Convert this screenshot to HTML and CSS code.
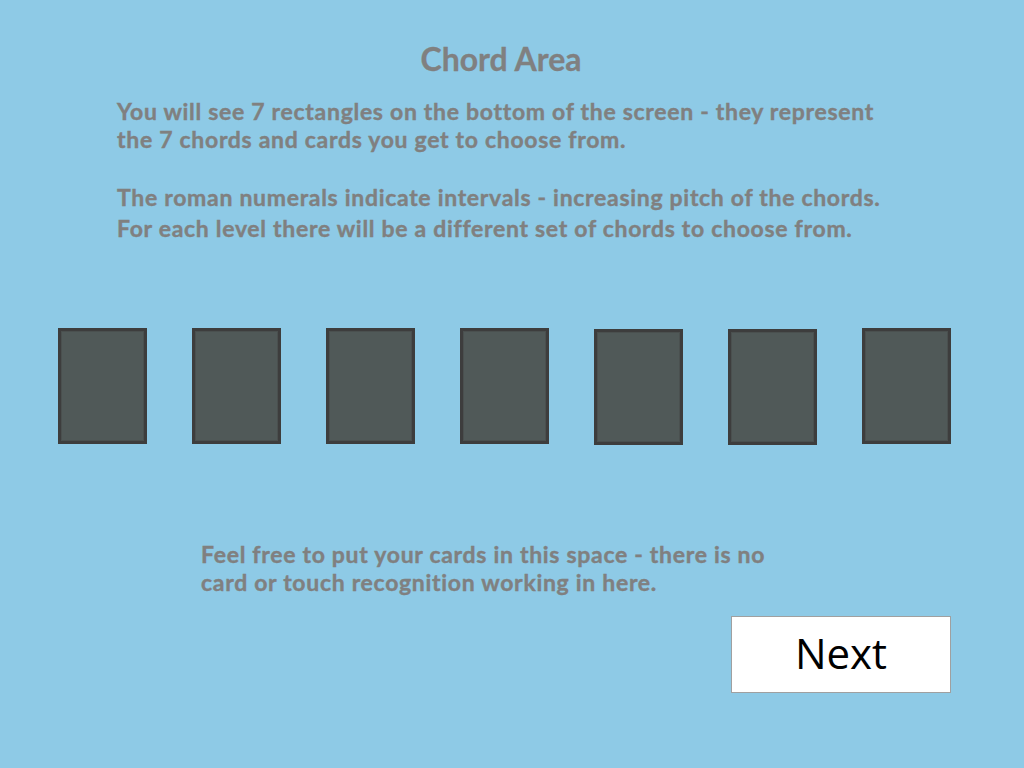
FILE: index.html
```html
<!DOCTYPE html>
<html lang="en">
<head>
<meta charset="utf-8">
<title>Chord Area</title>
<link rel="stylesheet" href="styles.css">
</head>
<body>
<main class="page">
  <section class="intro">
    <h1 class="title">Chord Area</h1>
    <p class="text text-first">You will see 7 rectangles on the bottom of the screen - they represent<br>the 7 chords and cards you get to choose from.</p>
    <p class="text text-second">The roman numerals indicate intervals - increasing pitch of the chords.<br>For each level there will be a different set of chords to choose from.</p>
  </section>
  <div class="cards">
    <div class="card"></div>
    <div class="card"></div>
    <div class="card"></div>
    <div class="card"></div>
    <div class="card card-low"></div>
    <div class="card card-low"></div>
    <div class="card"></div>
  </div>
  <p class="text note">Feel free to put your cards in this space - there is no<br>card or touch recognition working in here.</p>
  <div class="actions">
    <button class="next" type="button">Next</button>
  </div>
</main>
</body>
</html>
```
FILE: styles.css
```css
html, body {
  margin: 0;
  padding: 0;
  background: #8ecae6;
}

body {
  width: 1024px;
  height: 768px;
  overflow: hidden;
  font-family: Lato, "Liberation Sans", sans-serif;
}

.page {
  width: 893px;
  margin-left: 58px;
  padding-top: 40px;
  display: flex;
  flex-direction: column;
}

.intro {
  width: 768px;
  margin-left: 59px;
}

.title {
  margin: 0;
  font-size: 32px;
  line-height: 38px;
  font-weight: 700;
  color: #808080;
  text-align: center;
  -webkit-text-stroke: 0.3px #808080;
}

.text {
  margin: 0;
  font-size: 23px;
  line-height: 28px;
  font-weight: 700;
  letter-spacing: 0.7px;
  color: #808080;
  white-space: nowrap;
  -webkit-text-stroke: 0.4px #808080;
}

.text-first {
  margin-top: 19px;
}

.text-second {
  margin-top: 29px;
  line-height: 31px;
}

.cards {
  display: flex;
  gap: 45px;
  align-items: flex-start;
  margin-top: 84px;
}

.card {
  box-sizing: border-box;
  width: 89px;
  height: 116px;
  background: #505958;
  border: 3px solid #3d3d3d;
  box-shadow: inset 0 0 0 1px #4a504f;
}

.card-low {
  margin-top: 1px;
}

.note {
  margin-top: 95px;
  margin-left: 143px;
}

.actions {
  display: flex;
  justify-content: flex-end;
  margin-top: 20px;
}

.next {
  box-sizing: border-box;
  width: 220px;
  height: 77px;
  padding: 0 0 3px 0;
  background: #ffffff;
  border: 1px solid #a0a0a0;
  border-radius: 0;
  font-family: "Open Sans", "Noto Sans", sans-serif;
  font-size: 42px;
  font-weight: 400;
  color: #000000;
  line-height: 1;
}
```
